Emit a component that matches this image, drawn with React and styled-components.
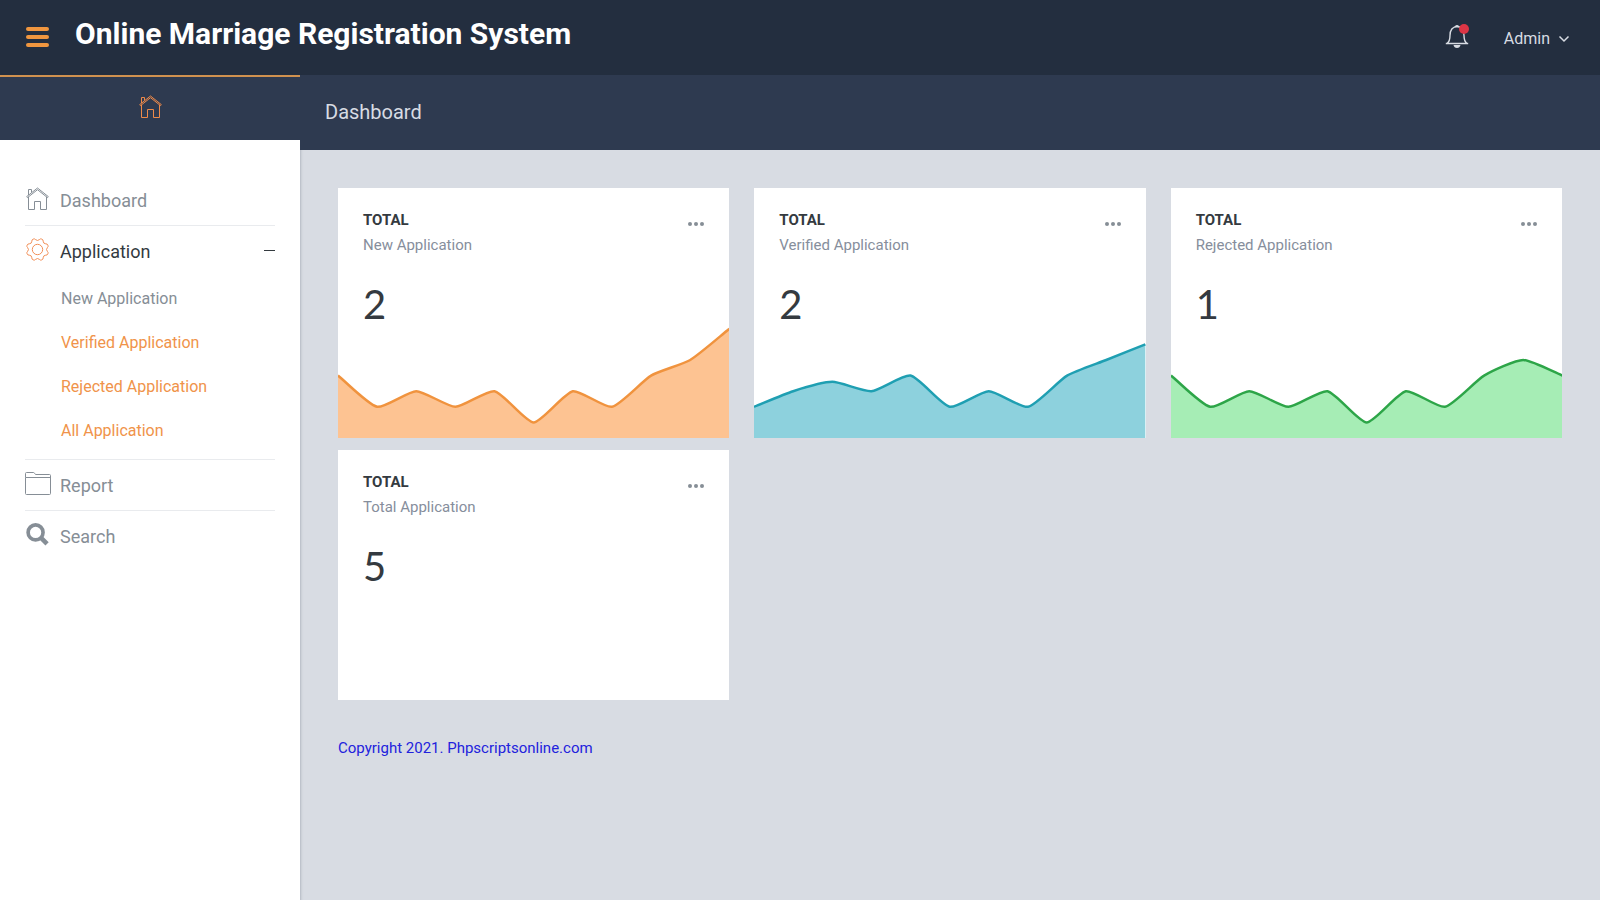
import React from 'react'
import styled, { createGlobalStyle } from 'styled-components'

const chartCards = [
    {
        name: 'New Application',
        count: 2,
        line: '#f0933e',
        fill: '#fdc392',
        values: [20, 10, 15, 10, 15, 5, 15, 10, 20, 25, 35],
    },
    {
        name: 'Verified Application',
        count: 2,
        line: '#1f9fb2',
        fill: '#8dd1dd',
        values: [10, 15, 18, 15, 20, 10, 15, 10, 20, 25, 30],
    },
    {
        name: 'Rejected Application',
        count: 1,
        line: '#2da548',
        fill: '#a6edb5',
        values: [20, 10, 15, 10, 15, 5, 15, 10, 20, 25, 20],
    },
    { name: 'Total Application', count: 5 },
]

const CHART_WIDTH = 390
const CHART_HEIGHT = 109
const UNIT = 3.12
const TENSION = 0.2

// Smooth line through the values, control points follow the neighbours
const linePath = (values) => {
    const step = CHART_WIDTH / (values.length - 1)
    const points = values.map((value, i) => ({ x: i * step, y: CHART_HEIGHT - value * UNIT }))
    const controls = points.map((point, i) => {
        const prev = points[i - 1] || point
        const next = points[i + 1] || point
        const before = Math.hypot(point.x - prev.x, point.y - prev.y)
        const after = Math.hypot(next.x - point.x, next.y - point.y)
        const a = (TENSION * before) / (before + after)
        const b = (TENSION * after) / (before + after)
        return {
            inX: point.x - a * (next.x - prev.x),
            inY: point.y - a * (next.y - prev.y),
            outX: point.x + b * (next.x - prev.x),
            outY: point.y + b * (next.y - prev.y),
        }
    })
    return points.reduce((path, point, i) => {
        if (i === 0) return `M${point.x} ${point.y}`
        const from = controls[i - 1]
        const to = controls[i]
        return `${path} C${from.outX} ${from.outY} ${to.inX} ${to.inY} ${point.x} ${point.y}`
    }, '')
}

const gearPath = () => {
    const at = (radius, degrees) => {
        const angle = (degrees * Math.PI) / 180
        return `${(11.5 + radius * Math.cos(angle)).toFixed(2)} ${(11.5 + radius * Math.sin(angle)).toFixed(2)}`
    }
    let path = ''
    for (let i = 0; i < 8; i++) {
        const tooth = 22.5 + i * 45
        path += `${i === 0 ? 'M' : 'L'}${at(11, tooth - 7)} Q${at(11.6, tooth)} ${at(11, tooth + 7)} `
        path += `L${at(10, tooth + 12)} Q${at(8.2, tooth + 22.5)} ${at(10, tooth + 33)} `
    }
    return `${path}Z`
}

const HomeIcon = () => (
    <Icon viewBox="0 0 23 23" aria-hidden="true">
        <path d="M11.5 1 .7 9.6l.8 1 10-7.900 10 7.900.8-1z" />
        <path d="M2.500 8V2.500h3V5.500" />
        <path d="M2.500 10v12.500h6v-8h6v8h6V10" />
    </Icon>
)

const GearIcon = () => (
    <Icon viewBox="0 0 23 23" aria-hidden="true">
        <path d={gearPath()} />
        <circle cx="11.5" cy="11.5" r="5.2" />
    </Icon>
)

const FolderIcon = () => (
    <FolderSvg viewBox="0 0 26 23" aria-hidden="true">
        <path d="M.5 5.500v-4q0-1 1-1h7q.7 0 1 .7l1 1.300h14q1 0 1 1v18q0 1-1 1h-23q-1 0-1-1zM.5 5.500h25" />
    </FolderSvg>
)

const SearchIcon = () => (
    <Icon viewBox="0 0 24 24" aria-hidden="true">
        <circle cx="10" cy="9.8" r="7.8" strokeWidth="3.8" />
        <path d="m16 15.800 6 6" strokeWidth="4.8" />
    </Icon>
)

const BellIcon = () => (
    <BellSvg viewBox="0 0 24 26" aria-hidden="true">
        <path d="M.8 19.500h22.400M2.200 19.300C4.600 17.500 5 15 5 11.500 5 6 7.500 2.600 12 2.600s7 3.400 7 8.900c0 3.500.4 6 2.800 7.800" />
        <path d="M10.500 2.500q1.500-1.600 3 0z" />
        <path className="solid" d="M8.500 21h7q-.6 3-3.500 3t-3.500-3z" />
    </BellSvg>
)

const Chart = ({ values, line, fill }) => {
    const path = linePath(values)
    return (
        <ChartSvg viewBox={`0 0 ${CHART_WIDTH} ${CHART_HEIGHT}`} preserveAspectRatio="none" aria-hidden="true">
            <path d={`${path} V${CHART_HEIGHT} H0 Z`} fill={fill} />
            <path d={path} fill="none" stroke={line} strokeWidth="2.5" vectorEffect="non-scaling-stroke" />
        </ChartSvg>
    )
}

const App = () => {
    return (
        <>
            <GlobalStyle />
            <Page>
                <Header>
                    <MenuButton type="button" aria-label="Toggle menu">
                        <Bar />
                        <Bar />
                        <Bar />
                    </MenuButton>
                    <Title>Online Marriage Registration System</Title>
                    <BellButton type="button" aria-label="Notifications">
                        <BellIcon />
                        <Badge />
                    </BellButton>
                    <UserButton type="button">
                        Admin
                        <Chevron viewBox="0 0 12 8" aria-hidden="true">
                            <path d="m1.5 1.500 4.500 4.500 4.500-4.500" />
                        </Chevron>
                    </UserButton>
                </Header>
                <Body>
                    <Sidebar>
                        <HomeTab href="#" aria-label="Home">
                            <HomeIcon />
                        </HomeTab>
                        <Menu>
                            <MenuItem>
                                <MenuLink href="#"><HomeIcon />Dashboard</MenuLink>
                            </MenuItem>
                            <MenuItem>
                                <MenuLink href="#" $open>
                                    <GearIcon />
                                    Application
                                    <Minus />
                                </MenuLink>
                                <SubMenu>
                                    <li><SubLink href="#" $muted>New Application</SubLink></li>
                                    <li><SubLink href="#">Verified Application</SubLink></li>
                                    <li><SubLink href="#">Rejected Application</SubLink></li>
                                    <li><SubLink href="#">All Application</SubLink></li>
                                </SubMenu>
                            </MenuItem>
                            <MenuItem>
                                <MenuLink href="#"><FolderIcon />Report</MenuLink>
                            </MenuItem>
                            <MenuItem>
                                <MenuLink href="#"><SearchIcon />Search</MenuLink>
                            </MenuItem>
                        </Menu>
                    </Sidebar>
                    <Main>
                        <PageHeader>
                            <PageTitle>Dashboard</PageTitle>
                        </PageHeader>
                        <Cards>
                            {chartCards.map((card) => (
                                <Card key={card.name}>
                                    <CardHead>
                                        <div>
                                            <CardTitle>Total</CardTitle>
                                            <CardName>{card.name}</CardName>
                                        </div>
                                        <MoreButton type="button" aria-label="More options">
                                            <Dot />
                                            <Dot />
                                            <Dot />
                                        </MoreButton>
                                    </CardHead>
                                    <Count>{card.count}</Count>
                                    {card.values && <Chart values={card.values} line={card.line} fill={card.fill} />}
                                </Card>
                            ))}
                        </Cards>
                        <Footer>Copyright 2021. Phpscriptsonline.com</Footer>
                    </Main>
                </Body>
            </Page>
        </>
    )
}

const GlobalStyle = createGlobalStyle`
    * {
        box-sizing: border-box;
    }
    body {
        margin: 0;
        background-color: #d8dce3;
        font-family: Roboto, sans-serif;
    }
    button {
        border: none;
        padding: 0;
        background: none;
        font-family: inherit;
        cursor: pointer;
    }
    a {
        text-decoration: none;
    }
`

const Page = styled.div`
    display: flex;
    flex-direction: column;
    min-height: 100vh;
`

const Header = styled.header`
    display: flex;
    align-items: center;
    height: 75px;
    padding: 0 30px 2px 26px;
    background-color: #232e3f;
`

const MenuButton = styled.button`
    display: flex;
    flex-direction: column;
    gap: 4px;
    width: 23px;
`

const Bar = styled.span`
    height: 4px;
    border-radius: 2px;
    background-color: #f0963f;
`

const Title = styled.h1`
    margin: 0 auto 6px 26px;
    color: white;
    font-size: 30px;
    font-weight: 700;
`

const BellButton = styled.button`
    position: relative;
    margin-right: 35px;
`

const BellSvg = styled.svg`
    display: block;
    width: 24px;
    height: 26px;
    fill: none;
    stroke: #d8dce3;
    stroke-width: 1.4;
    .solid {
        fill: #d8dce3;
        stroke: none;
    }
`

const Badge = styled.span`
    position: absolute;
    top: 0;
    right: 0;
    width: 10px;
    height: 10px;
    border-radius: 50%;
    background-color: #dc3545;
`

const UserButton = styled.button`
    display: flex;
    align-items: center;
    gap: 8px;
    padding-top: 4px;
    color: #d8dce3;
    font-size: 16px;
`

const Chevron = styled.svg`
    width: 12px;
    height: 8px;
    fill: none;
    stroke: currentColor;
    stroke-width: 1.5;
`

const Body = styled.div`
    display: flex;
    flex: 1;
`

const Sidebar = styled.aside`
    flex: 0 0 300px;
    background-color: white;
    box-shadow: 0 2px 3px rgba(50, 60, 80, 0.4);
`

const HomeTab = styled.a`
    display: flex;
    justify-content: center;
    align-items: center;
    height: 65px;
    padding-bottom: 2px;
    border-top: 2px solid #d0914f;
    background-color: #2e3a50;
    color: #ee8a4a;
`

const Menu = styled.ul`
    margin: 0;
    padding: 35px 25px;
    list-style: none;
`

const MenuItem = styled.li`
    & + & {
        border-top: 1px solid #e9ebee;
    }
`

const Icon = styled.svg`
    flex-shrink: 0;
    width: 23px;
    height: 23px;
    margin: 0 1px 3px;
    fill: none;
    stroke: currentColor;
`

const FolderSvg = styled(Icon)`
    width: 26px;
    margin: 0 -1px 3px 0;
`

const MenuLink = styled.a`
    display: flex;
    align-items: center;
    gap: 10px;
    height: 50px;
    color: ${({ $open }) => ($open ? '#333a3f' : '#868e96')};
    font-size: 18px;
    ${Icon} {
        color: ${({ $open }) => ($open ? '#f28f57' : '#868e96')};
    }
`

const Minus = styled.span`
    width: 11px;
    height: 1px;
    margin: 0 0 2px auto;
    background-color: #333a3f;
`

const SubMenu = styled.ul`
    margin: 0;
    padding: 1px 0 6px 36px;
    list-style: none;
`

const SubLink = styled.a`
    display: block;
    color: ${({ $muted }) => ($muted ? '#868e96' : '#f0934a')};
    font-size: 16px;
    line-height: 44px;
`

const Main = styled.main`
    flex: 1;
    min-width: 0;
`

const PageHeader = styled.div`
    display: flex;
    align-items: center;
    height: 75px;
    padding: 0 25px 2px;
    background-color: #2e3a50;
`

const PageTitle = styled.h2`
    margin: 0;
    color: #d8dce3;
    font-size: 20px;
    font-weight: 400;
`

const Cards = styled.div`
    display: grid;
    grid-template-columns: repeat(3, 1fr);
    gap: 12px 25px;
    padding: 38px 38px 0;
`

const Card = styled.section`
    display: flex;
    flex-direction: column;
    min-height: 250px;
    overflow: hidden;
    background-color: white;
`

const CardHead = styled.div`
    display: flex;
    justify-content: space-between;
    align-items: flex-start;
    padding: 20px 25px 0;
`

const CardTitle = styled.h3`
    margin: 0;
    color: #343a40;
    font-size: 15px;
    font-weight: 700;
    line-height: 25px;
    text-transform: uppercase;
`

const CardName = styled.p`
    margin: 0;
    color: #868e9c;
    font-size: 15px;
    line-height: 25px;
`

const MoreButton = styled.button`
    display: flex;
    gap: 2px;
    padding: 14px 0;
`

const Dot = styled.span`
    width: 4px;
    height: 4px;
    border-radius: 50%;
    background-color: #868e96;
`

const Count = styled.p`
    margin: 21px 25px 0;
    color: #343a40;
    font-family: Lato, sans-serif;
    font-size: 40px;
    line-height: 50px;
`

const ChartSvg = styled.svg`
    display: block;
    flex-shrink: 0;
    width: 100%;
    height: 109px;
    margin-top: auto;
    overflow: visible;
`

const Footer = styled.footer`
    padding: 38px;
    color: #2222dd;
    font-size: 15px;
    line-height: 20px;
`

export default App
